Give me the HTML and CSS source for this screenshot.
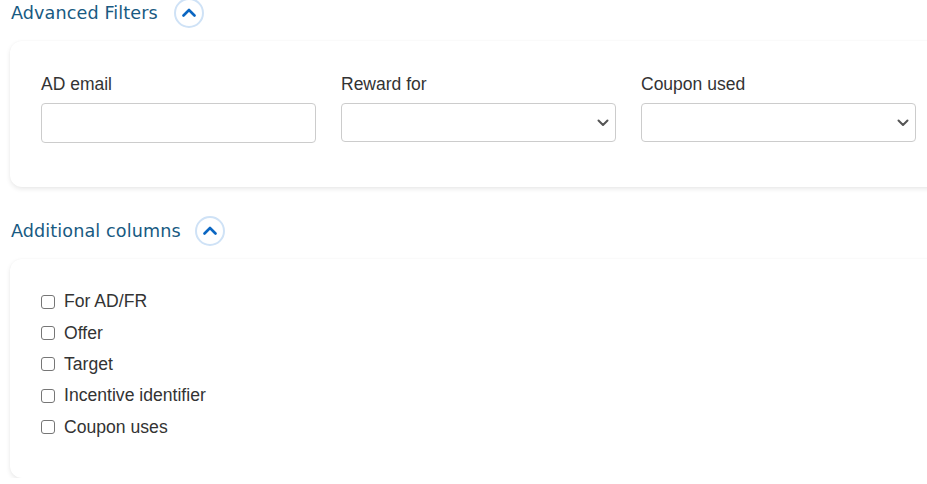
FILE: index.html
```html
<!DOCTYPE html>
<html>
<head>
<meta charset="utf-8">
<link rel="stylesheet" href="styles.css">
</head>
<body>
<div class="page">
  <div class="section-head first">
    <span class="section-title">Advanced Filters</span>
    <button class="toggle" type="button" aria-label="Collapse">
      <svg width="14" height="9" viewBox="0 0 14 9"><path d="M1.5 7.5 L7 2 L12.5 7.5" fill="none" stroke="#0a66c2" stroke-width="2.6" stroke-linecap="round" stroke-linejoin="round"/></svg>
    </button>
  </div>
  <div class="card filters">
    <div class="field">
      <label class="label">AD email</label>
      <input class="control" type="text">
    </div>
    <div class="field">
      <label class="label">Reward for</label>
      <select class="control select"><option></option></select>
    </div>
    <div class="field">
      <label class="label">Coupon used</label>
      <select class="control select"><option></option></select>
    </div>
  </div>

  <div class="section-head second">
    <span class="section-title">Additional columns</span>
    <button class="toggle" type="button" aria-label="Collapse">
      <svg width="14" height="9" viewBox="0 0 14 9"><path d="M1.5 7.5 L7 2 L12.5 7.5" fill="none" stroke="#0a66c2" stroke-width="2.6" stroke-linecap="round" stroke-linejoin="round"/></svg>
    </button>
  </div>
  <div class="card columns">
    <label class="check"><input type="checkbox"><span>For AD/FR</span></label>
    <label class="check"><input type="checkbox"><span>Offer</span></label>
    <label class="check"><input type="checkbox"><span>Target</span></label>
    <label class="check"><input type="checkbox"><span>Incentive identifier</span></label>
    <label class="check"><input type="checkbox"><span>Coupon uses</span></label>
  </div>
</div>
</body>
</html>
```

FILE: styles.css
```css
html, body {
  margin: 0;
  padding: 0;
  background: #ffffff;
  overflow: hidden;
}
.page {
  padding-left: 10px;
  font-family: "Liberation Sans", Arial, sans-serif;
  color: #333333;
}
.section-head {
  display: flex;
  align-items: center;
  height: 30px;
  padding-left: 1px;
}
.section-head.first {
  margin-top: -2px;
}
.section-head.second {
  margin-top: 29px;
}
.section-title {
  font-family: "DejaVu Sans", sans-serif;
  font-size: 17.6px;
  font-weight: 500;
  color: #185a82;
  letter-spacing: 0.1px;
}
.toggle {
  margin-left: 16px;
  width: 30px;
  height: 30px;
  box-sizing: border-box;
  border: 2px solid #cfe2f6;
  border-radius: 50%;
  background: #ffffff;
  display: flex;
  align-items: center;
  justify-content: center;
  padding: 0 0 2px 0;
}
.second .toggle {
  margin-left: 14px;
}
.card {
  margin-top: 13px;
  margin-right: -30px;
  background: #ffffff;
  border-radius: 12px;
  box-shadow: 0 2px 5px rgba(0, 0, 0, 0.09), 0 0 2px rgba(0, 0, 0, 0.03);
}
.filters {
  display: flex;
  gap: 25px;
  padding: 33px 31px 44px 31px;
}
.field {
  display: flex;
  flex-direction: column;
  width: 275px;
}
.label {
  font-size: 17.5px;
  line-height: 20px;
  color: #333333;
  margin-bottom: 9px;
}
.control {
  box-sizing: border-box;
  width: 275px;
  height: 40px;
  border: 1px solid #cccccc;
  border-radius: 4px;
  background: #ffffff;
  font-family: inherit;
  font-size: 16px;
  margin: 0;
  outline: none;
}
.select {
  height: 39px;
  appearance: none;
  -webkit-appearance: none;
  background-image: url("data:image/svg+xml;utf8,<svg xmlns='http://www.w3.org/2000/svg' width='12' height='8' viewBox='0 0 12 8'><path d='M1.5 1.5 L6 6 L10.5 1.5' fill='none' stroke='%23555555' stroke-width='2' stroke-linecap='round' stroke-linejoin='round'/></svg>");
  background-repeat: no-repeat;
  background-position: right 6px center;
}
.columns {
  display: flex;
  flex-direction: column;
  padding: 27px 31px 35px 31px;
}
.check {
  display: flex;
  align-items: center;
  height: 31.4px;
  font-size: 17.6px;
  color: #333333;
}
.check input {
  appearance: none;
  -webkit-appearance: none;
  width: 14px;
  height: 14px;
  margin: 0 9px 0 0;
  border: 1px solid #767676;
  border-radius: 3px;
  background: #ffffff;
}
```
